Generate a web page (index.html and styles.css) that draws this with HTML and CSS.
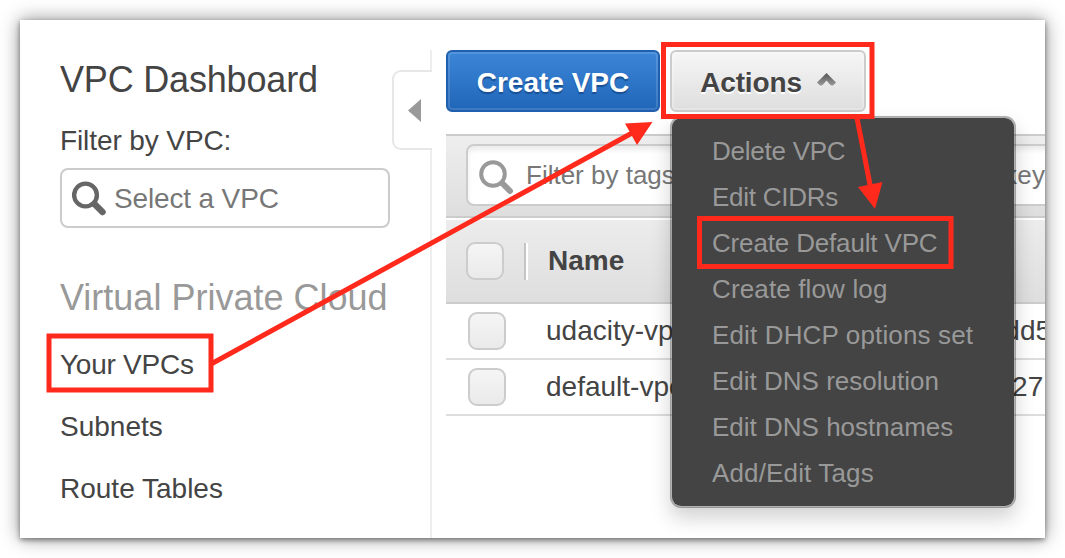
FILE: index.html
```html
<!DOCTYPE html>
<html lang="en">
<head>
<meta charset="utf-8">
<title>VPC Dashboard</title>
<link rel="stylesheet" href="styles.css">
</head>
<body>
<div class="window">
  <aside class="sidebar">
    <h1 class="title">VPC Dashboard</h1>
    <div class="filter-label">Filter by VPC:</div>
    <div class="select">
      <svg class="lens" width="36" height="36" viewBox="0 0 36 36"><circle cx="13.500" cy="14" r="11.400" fill="none" stroke="#666" stroke-width="4.400"/><path d="M22.500 23L30.500 31" stroke="#666" stroke-width="6.500" stroke-linecap="round"/></svg>
      <span>Select a VPC</span>
    </div>
    <h2 class="group">Virtual Private Cloud</h2>
    <nav class="links">
      <a class="tight">Your VPCs</a>
      <a>Subnets</a>
      <a>Route Tables</a>
    </nav>
    <div class="collapse"><svg width="13" height="23" viewBox="0 0 13 23"><path d="M13 0V23L0 11.500Z" fill="#999"/></svg></div>
  </aside>
  <main class="main">
    <div class="buttons">
      <button class="btn primary">Create VPC</button>
      <button class="btn actions">Actions
        <svg width="19" height="13" viewBox="0 0 19 13"><defs><linearGradient id="chevron" x2="0" y2="1"><stop stop-color="#555"/><stop offset="1" stop-color="#999"/></linearGradient></defs><path d="M9.500 0L19 9.500L16 12.500Q14 13 12.500 11L9.500 7.500L6.500 11Q5 13 3 12.500L0 9.500Z" fill="url(#chevron)"/></svg>
      </button>
    </div>
    <div class="toolbar">
      <div class="search">
        <svg class="lens" width="36" height="36" viewBox="0 0 36 36"><circle cx="14" cy="14" r="11.800" fill="none" stroke="#999" stroke-width="4"/><path d="M23.500 23.500L31 31" stroke="#999" stroke-width="6" stroke-linecap="round"/></svg>
        <span>Filter by tags <span class="hint">and attributes or search by keyword</span></span>
      </div>
    </div>
    <div class="row head"><i class="check"></i><i class="divider"></i><span>Name</span></div>
    <div class="row"><i class="check"></i><span>udacity-vpc</span><span class="id">vpc-0a1b3edd5</span></div>
    <div class="row"><i class="check"></i><span>default-vpc</span><span class="id">vpc-0a1b3ef27</span></div>
  </main>
  <div class="menu">
    <div class="tight">Delete VPC</div>
    <div class="tight">Edit CIDRs</div>
    <div class="tighter">Create Default VPC</div>
    <div class="wide">Create flow log</div>
    <div class="wide">Edit DHCP options set</div>
    <div>Edit DNS resolution</div>
    <div>Edit DNS hostnames</div>
    <div class="wide">Add/Edit Tags</div>
  </div>
</div>
<svg class="marks" width="1065" height="558" viewBox="0 0 1065 558">
  <g fill="none" stroke="#ff291c" stroke-width="5">
    <rect x="49" y="336" width="162" height="54"/>
    <rect x="663.500" y="44.500" width="208.500" height="72"/>
    <rect x="699.500" y="218.500" width="251.500" height="48"/>
    <path d="M212 363.500L633 132.500M857 118L870.500 187"/>
  </g>
  <path d="M652.500 122L637 145L625 123.500ZM875 209L858 187L882.500 182Z" fill="#ff291c"/>
</svg>
</body>
</html>
```
FILE: styles.css
```css
* { box-sizing: border-box; }
body {
  margin: 0;
  padding: 20px;
  width: 1065px;
  height: 558px;
  overflow: hidden;
  background: #fff;
  font: 28px "Liberation Sans", Arial, sans-serif;
  color: #444;
}
.window {
  position: relative;
  display: flex;
  gap: 14px;
  width: 1025px;
  height: 518px;
  background: #fff;
  box-shadow: 0 2px 5px rgba(0, 0, 0, .42), 0 0 18px rgba(0, 0, 0, .45);
}
.sidebar {
  position: relative;
  flex: none;
  width: 412px;
  padding: 40px 42px 0 40px;
  white-space: nowrap;
}
/* Separator line on the sidebar's right edge */
.sidebar::after {
  content: "";
  position: absolute;
  top: 30px;
  right: 0;
  bottom: 0;
  width: 2px;
  background: #eee;
}
.title, .group {
  margin: 0;
  font-size: 36px;
  font-weight: 400;
  line-height: 40px;
}
.title { letter-spacing: -.18px; }
.filter-label { padding: 21px 0 7px; line-height: 40px; letter-spacing: -.1px; }
.select {
  display: flex;
  align-items: center;
  gap: 6px;
  width: 330px;
  height: 60px;
  padding: 2px 0 0 10px;
  border: 2px solid #ccc;
  border-radius: 8px;
  color: #777;
  letter-spacing: -.15px;
}
.group { margin-top: 50px; color: #999; }
.links { display: flex; flex-direction: column; padding-top: 16px; }
.links a { line-height: 62px; }
.tight { letter-spacing: -.25px; }
.tighter { letter-spacing: -.16px; }
.wide { letter-spacing: .14px; }
.lens { flex: none; }
.collapse {
  position: absolute;
  z-index: 1;
  top: 50px;
  right: 0;
  display: flex;
  align-items: center;
  width: 40px;
  height: 80px;
  padding: 0 0 0 14px;
  background: #fff;
  border: 2px solid #e7e7e7;
  border-right: 0;
  border-radius: 9px 0 0 9px;
}
.main {
  flex: 1;
  min-width: 0;
  padding-top: 30px;
  overflow: hidden;
}
.buttons { display: flex; gap: 10px; height: 84px; }
.btn {
  display: flex;
  align-items: center;
  justify-content: center;
  height: 62px;
  padding: 3px 0 0;
  border: 2px solid #ccc;
  border-radius: 6px;
  font: bold 28px "Liberation Sans", Arial, sans-serif;
}
.primary {
  width: 214px;
  border-color: #1f5fae;
  color: #fff;
  background: linear-gradient(#3c86d8, #2066b9);
  box-shadow: inset 0 0 0 2px rgba(255, 255, 255, .13);
  text-shadow: 0 2px 1px #194f92;
}
.actions {
  gap: 15px;
  width: 196px;
  color: #444;
  background: linear-gradient(#f6f6f6, #dedede);
  box-shadow: inset 0 0 0 2px rgba(255, 255, 255, .25);
  text-shadow: 0 2px 0 #fff;
  letter-spacing: -.15px;
}
.actions svg { margin-bottom: 7px; }
.toolbar {
  height: 84px;
  padding: 8px 0 0 20px;
  border-top: 2px solid #ccc;
  border-bottom: 2px solid #ccc;
  background: linear-gradient(#eee, #dedede);
}
.search {
  display: flex;
  align-items: center;
  gap: 11px;
  width: 700px;
  height: 62px;
  padding-left: 11px;
  border: 2px solid #ccc;
  border-radius: 8px;
  background: #fff;
  box-shadow: inset 0 4px 5px rgba(0, 0, 0, .08);
  color: #777;
  font-size: 26px;
  white-space: nowrap;
}
.search .lens { margin-top: 5px; }
.hint { letter-spacing: .25px; }
.row {
  display: grid;
  grid-template-columns: 78px 312px 1fr;
  align-items: center;
  height: 56px;
  padding: 0 0 1px 22px;
  border-bottom: 2px solid #ddd;
  white-space: nowrap;
}
.head {
  grid-template-columns: 58px 24px 1fr;
  height: 86px;
  padding: 0 0 0 20px;
  border-top: 2px solid #fff;
  border-bottom-color: #ccc;
  background: linear-gradient(#ececec, #dedede);
  font-weight: bold;
}
.check {
  width: 38px;
  height: 38px;
  border: 2px solid #ccc;
  border-radius: 9px;
  background: linear-gradient(#f5f5f5, #eaeaea);
}
.divider { width: 4px; height: 37px; border-left: 2px solid #c4c4c4; border-right: 2px solid #fff; }
.menu {
  position: absolute;
  top: 96px;
  left: 650px;
  width: 346px;
  height: 392px;
  padding: 10px 0 0 40px;
  border: 2px solid rgba(0, 0, 0, .3);
  border-radius: 11px;
  background: #444;
  background-clip: padding-box;
  box-shadow: 0 10px 20px rgba(0, 0, 0, .18);
  color: #999;
  font-size: 26px;
  line-height: 46px;
  white-space: nowrap;
}
.marks { position: absolute; top: 0; left: 0; }
```
